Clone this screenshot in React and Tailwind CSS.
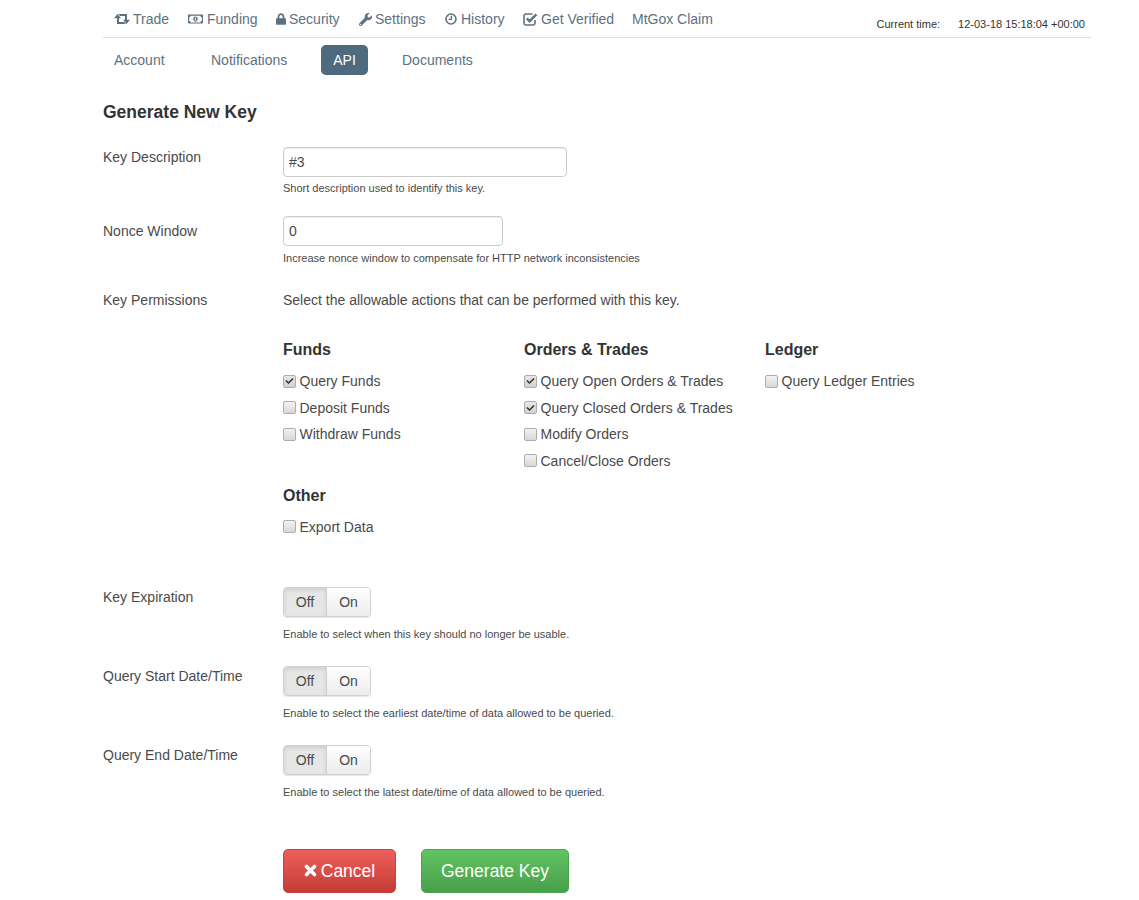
import React from "react";
import { FaRegMoneyBillAlt, FaLock, FaWrench, FaCheck } from "react-icons/fa";

const RetweetIcon = ({ className }) => (
  <svg viewBox="0 0 16 14" className={className} fill="currentColor">
    <path d="M0 6.2 3.5 2l3.5 4.2H5V10h5l1.8 2H3.6c-.3 0-.6-.3-.6-.6V6.2H0Z" />
    <path d="M16 7.8 12.5 12 9 7.8h2V4H6L4.2 2h8.2c.3 0 .6.3.6.6v5.2h3Z" />
  </svg>
);

const ClockIcon = ({ className }) => (
  <svg viewBox="0 0 13 13" className={className} fill="none" stroke="currentColor" strokeWidth="1.7">
    <circle cx="6.5" cy="6.5" r="5.4" />
    <path d="M6.9 3v4H4" strokeWidth="1.4" />
  </svg>
);

const CheckSquareIcon = ({ className }) => (
  <svg viewBox="0 0 15 14" className={className} fill="none" stroke="currentColor">
    <path d="M9.5 2H3A1.9 1.9 0 0 0 1 4v7a1.9 1.9 0 0 0 2 2h7a1.9 1.9 0 0 0 2-2V8" strokeWidth="1.6" />
    <path d="M3.8 6.4 6.6 9.2 13.4 2.4" strokeWidth="2.4" />
  </svg>
);

const TimesIcon = ({ className }) => (
  <svg viewBox="0 0 13 13" className={className} fill="none" stroke="currentColor" strokeWidth="3.6" strokeLinecap="round">
    <path d="M2.5 2.5 10.5 10.5M10.5 2.5 2.5 10.5" />
  </svg>
);

const topNav = [
  { label: "Trade", Icon: RetweetIcon, icon: "w-[16px] h-[14px]", gap: "gap-[3px]", w: "w-[74px]" },
  { label: "Funding", Icon: FaRegMoneyBillAlt, icon: "w-[15px] h-[14px]", gap: "gap-[4px]", w: "w-[88px]" },
  { label: "Security", Icon: FaLock, icon: "w-[10px] h-[12px]", gap: "gap-[3px]", w: "w-[83px]" },
  { label: "Settings", Icon: FaWrench, icon: "w-[13px] h-[13px]", gap: "gap-[3px]", w: "w-[86px]" },
  { label: "History", Icon: ClockIcon, icon: "w-[12px] h-[12px]", gap: "gap-[4px]", w: "w-[78px]" },
  { label: "Get Verified", Icon: CheckSquareIcon, icon: "w-[15px] h-[14px]", gap: "gap-[3px]", w: "w-[109px]" },
  { label: "MtGox Claim", w: "" },
];

const Box = ({ checked }) => (
  <span
    className={
      "flex h-[13px] w-[13px] shrink-0 items-center justify-center rounded-[2px] border border-[#adadad] bg-gradient-to-b " +
      (checked ? "from-[#e6e6e6] to-[#d2d2d2]" : "from-[#f2f2f2] to-[#d8d8d8]")
    }
  >
    {checked && <FaCheck className="h-[8px] w-[9px] text-[#333]" />}
  </span>
);

const Check = ({ label, checked }) => (
  <label className="flex h-[26.5px] items-center gap-[3.5px]">
    <Box checked={checked} />
    <span>{label}</span>
  </label>
);

const Group = ({ title, items }) => (
  <div>
    <h4 className="text-[16px] font-bold leading-[20px] text-[#333]">{title}</h4>
    <div className="mt-[7.75px]">
      {items.map(([l, c]) => (
        <Check key={l} label={l} checked={c} />
      ))}
    </div>
  </div>
);

const Help = ({ children, className }) => (
  <p className={"text-[11px] leading-[14px] text-[#4a4a4a] " + className}>{children}</p>
);

const Toggle = () => (
  <div className="flex h-[30px] w-[88px] rounded-[4px] border border-[#d0d0d0] text-[#4a4a4a] shadow-[0_1px_1px_rgba(0,0,0,0.1)]">
    <button className="w-[43px] rounded-l-[3px] border-r border-[#d0d0d0] bg-[#e6e6e6] shadow-[inset_0_2px_4px_rgba(0,0,0,0.1)]">Off</button>
    <button className="flex-1 rounded-r-[3px] bg-gradient-to-b from-white to-[#ececec]">On</button>
  </div>
);

const ToggleRow = ({ label, help, className }) => (
  <div className={"flex " + className}>
    <div className="w-[180px] leading-[20px]">{label}</div>
    <div>
      <Toggle />
      <Help className="mt-[10px]">{help}</Help>
    </div>
  </div>
);

export default function App() {
  return (
    <div className="ml-[103px] w-[988px] pb-[7px] text-[14px] leading-[20px] text-[#4a4a4a] [font-family:'Liberation_Sans',Arial,sans-serif]">
      <div className="flex h-[38px] items-start justify-between border-b border-[#ddd]">
        <nav className="flex h-[37px] items-center pl-[11px] pt-[1px] text-[#5c7183]">
          {topNav.map(({ label, Icon, icon, gap, w }) => (
            <a key={label} className={"flex items-center " + (gap || "") + " " + w}>
              {Icon && <Icon className={icon} />}
              <span>{label}</span>
            </a>
          ))}
        </nav>
        <div className="mr-[6px] mt-[17px] flex gap-[18px] text-[11px] leading-[14px] text-[#333]">
          <span>Current time:</span>
          <span>12-03-18 15:18:04 +00:00</span>
        </div>
      </div>

      <div className="mt-[7px] flex h-[30px] gap-[23px] text-[#5c7183]">
        <a className="flex w-[74px] items-center rounded-[4px] px-[11px]">Account</a>
        <a className="flex w-[98px] items-center rounded-[4px] px-[11px]">Notifications</a>
        <a className="flex w-[47px] items-center justify-center rounded-[5px] bg-[#4e6a7f] text-white">API</a>
        <a className="flex items-center rounded-[4px] px-[11px]">Documents</a>
      </div>

      <h3 className="mt-[27px] text-[17.5px] font-bold leading-[20px] text-[#333]">Generate New Key</h3>

      <div className="mt-[25px] flex">
        <div className="w-[180px]">Key Description</div>
        <div>
          <div className="flex h-[30px] w-[284px] items-center rounded-[4px] border border-[#ccc] px-[5px] shadow-[inset_0_1px_1px_rgba(0,0,0,0.075)]">#3</div>
          <Help className="mt-[4px]">Short description used to identify this key.</Help>
        </div>
      </div>

      <div className="mt-[21px] flex">
        <div className="w-[180px] pt-[5px]">Nonce Window</div>
        <div>
          <div className="flex h-[30px] w-[220px] items-center rounded-[4px] border border-[#ccc] px-[5px] shadow-[inset_0_1px_1px_rgba(0,0,0,0.075)]">0</div>
          <Help className="mt-[5px]">Increase nonce window to compensate for HTTP network inconsistencies</Help>
        </div>
      </div>

      <div className="mt-[25px] flex">
        <div className="w-[180px]">Key Permissions</div>
        <div>
          <div>Select the allowable actions that can be performed with this key.</div>
          <div className="mt-[30px] grid w-[723px] grid-cols-3">
            <Group title="Funds" items={[["Query Funds", true], ["Deposit Funds"], ["Withdraw Funds"]]} />
            <Group
              title="Orders & Trades"
              items={[["Query Open Orders & Trades", true], ["Query Closed Orders & Trades", true], ["Modify Orders"], ["Cancel/Close Orders"]]}
            />
            <Group title="Ledger" items={[["Query Ledger Entries"]]} />
          </div>
          <div className="mt-[12px]">
            <Group title="Other" items={[["Export Data"]]} />
          </div>
        </div>
      </div>

      <ToggleRow className="mt-[46.75px]" label="Key Expiration" help="Enable to select when this key should no longer be usable." />
      <ToggleRow className="mt-[25px]" label="Query Start Date/Time" help="Enable to select the earliest date/time of data allowed to be queried." />
      <ToggleRow className="mt-[25px]" label="Query End Date/Time" help="Enable to select the latest date/time of data allowed to be queried." />

      <div className="ml-[180px] mt-[50px] flex gap-[25px] text-[17.5px] text-white [text-shadow:0_-1px_0_rgba(0,0,0,0.25)]">
        <button className="flex h-[44px] w-[113px] items-center justify-center gap-[4px] rounded-[5px] border border-[#c9403c] bg-gradient-to-b from-[#ee5f5b] to-[#c43c35]">
          <TimesIcon className="h-[13px] w-[13px]" />
          Cancel
        </button>
        <button className="flex h-[44px] w-[148px] items-center justify-center rounded-[5px] border border-[#4ba54f] bg-gradient-to-b from-[#62c462] to-[#489f4b]">
          Generate Key
        </button>
      </div>
    </div>
  );
}
